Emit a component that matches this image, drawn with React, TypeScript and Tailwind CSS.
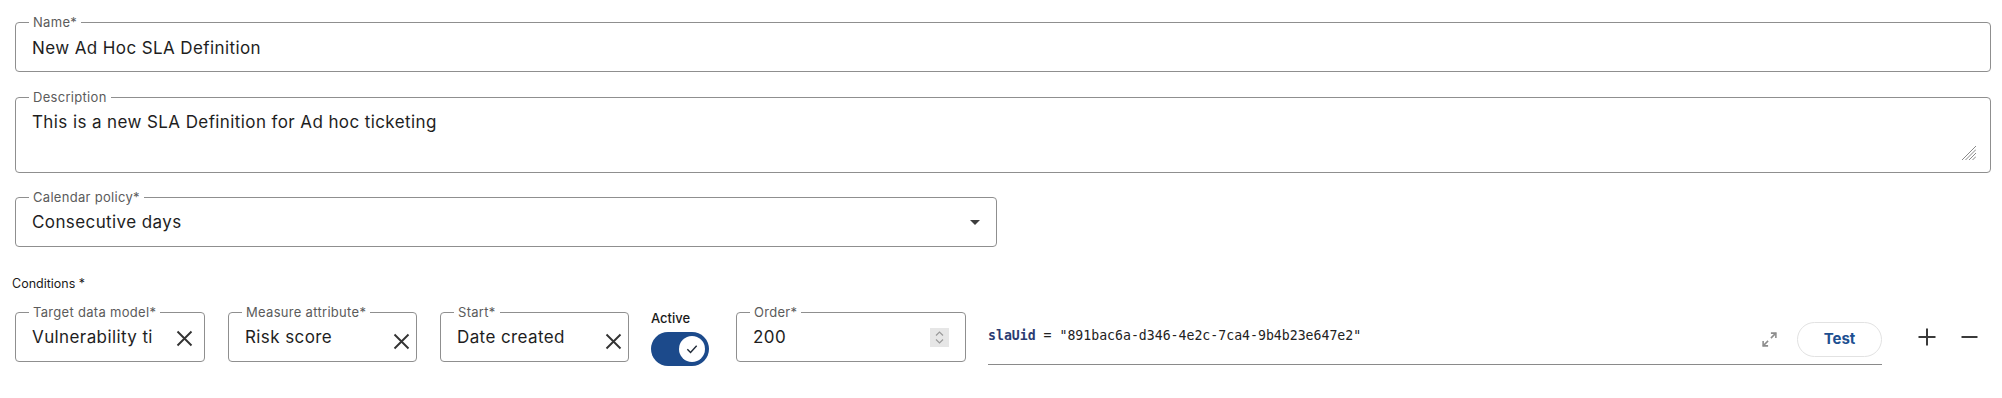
import React from "react";

const Field = ({
  label,
  className,
  children,
}: {
  label: string;
  className: string;
  children?: React.ReactNode;
}) => (
  <div className={"relative rounded-[4px] border border-[#8f8f8f] " + className}>
    <span className="absolute left-[13px] -top-[9px] bg-white px-[4px] text-[13px] leading-[16px] tracking-[0.3px] text-[#5b5b5b] whitespace-nowrap">
      {label}
    </span>
    {children}
  </div>
);

const CloseIcon = ({ className }: { className?: string }) => (
  <svg width="17" height="17" viewBox="0 0 17 17" className={className}>
    <path d="M1.5 1.5 L15.5 15.5 M15.5 1.5 L1.5 15.5" stroke="#333333" strokeWidth="1.9" />
  </svg>
);

export default function App() {
  return (
    <div className="min-h-[398px] bg-white pl-[15px] pr-[11px] pt-[22px] font-['Inter',sans-serif] text-[#1e1e1e]">
      <Field label="Name*" className="flex h-[50px] items-center pl-[16px] pt-[4px] text-[17px] tracking-[0.4px]">
        New Ad Hoc SLA Definition
      </Field>

      <Field label="Description" className="mt-[25px] h-[76px] pl-[16px] pt-[12px] text-[17px] leading-[24px] tracking-[0.4px]">
        This is a new SLA Definition for Ad hoc ticketing
        <svg
          width="15"
          height="14"
          viewBox="0 0 15 14"
          className="absolute bottom-[12px] right-[14px]"
        >
          <g stroke="#8a8a8a" strokeWidth="1">
            <line x1="15" y1="0" x2="1" y2="14" />
            <line x1="15" y1="3.5" x2="4.5" y2="14" />
            <line x1="15" y1="7" x2="8" y2="14" />
            <line x1="15" y1="10.5" x2="11.5" y2="14" />
          </g>
        </svg>
      </Field>

      <Field label="Calendar policy*" className="mt-[24px] flex h-[50px] w-[982px] items-center justify-between pl-[16px] pr-[16px] text-[17px] tracking-[0.4px]">
        <span className="pt-[2px]">Consecutive days</span>
        <svg width="10" height="5" viewBox="0 0 10 5">
          <path d="M0 0 L10 0 L5 5 Z" fill="#3d3d3d" />
        </svg>
      </Field>

      <div className="-ml-[3px] mt-[29px] text-[12.5px] leading-[16px] text-[#1a1a1a]">
        Conditions *
      </div>

      <div className="mt-[20px] flex items-start">
        <Field label="Target data model*" className="flex h-[50px] w-[190px] items-center pl-[16px] pr-[11px] pt-[2px] text-[17px] tracking-[0.4px]">
          <span className="w-[121px] overflow-hidden whitespace-nowrap">Vulnerability tickets</span>
          <CloseIcon className="ml-auto" />
        </Field>

        <Field label="Measure attribute*" className="ml-[23px] flex h-[50px] w-[189px] items-center pl-[16px] pr-[6px] pt-[2px] text-[17px] tracking-[0.4px]">
          <span className="whitespace-nowrap">Risk score</span>
          <CloseIcon className="ml-auto mt-[6px]" />
        </Field>

        <Field label="Start*" className="ml-[23px] flex h-[50px] w-[189px] items-center pl-[16px] pr-[6px] pt-[2px] text-[17px] tracking-[0.4px]">
          <span className="whitespace-nowrap">Date created</span>
          <CloseIcon className="ml-auto mt-[6px]" />
        </Field>

        <div className="-mt-[2px] ml-[22px] flex flex-col">
          <span className="text-[13px] font-medium leading-[16px] text-[#1a1a1a]">Active</span>
          <div className="mt-[6px] flex h-[34px] w-[58px] items-center justify-end rounded-full bg-[#1c4a8b]">
            <div className="mr-[4px] flex h-[26px] w-[26px] items-center justify-center rounded-full bg-white">
              <svg width="14" height="14" viewBox="0 0 24 24">
                <path d="M4 12.5 L9.5 18 L20 6.5" fill="none" stroke="#1f2937" strokeWidth="2.4" />
              </svg>
            </div>
          </div>
        </div>

        <Field label="Order*" className="ml-[27px] flex h-[50px] w-[230px] items-center justify-between pl-[16px] pr-[16px] text-[17px] tracking-[0.4px]">
          <span className="pt-[2px]">200</span>
          <div className="flex h-[19px] w-[19px] flex-col items-center justify-center bg-[#e6e6e6]">
            <svg width="9" height="15" viewBox="0 0 9 15">
              <path d="M1 5.5 L4.5 2 L8 5.5" fill="none" stroke="#9a9a9a" strokeWidth="1.2" />
              <path d="M1 9.5 L4.5 13 L8 9.5" fill="none" stroke="#9a9a9a" strokeWidth="1.2" />
            </svg>
          </div>
        </Field>

        <div className="ml-[22px] flex h-[53px] flex-1 items-center border-b border-[#8a8a8a]">
          <div className="mb-[4px] whitespace-nowrap font-['DejaVu_Sans_Mono',monospace] text-[13.2px] text-[#222]">
            <span className="font-bold text-[#2b3b72]">slaUid</span>
            {' = "891bac6a-d346-4e2c-7ca4-9b4b23e647e2"'}
          </div>
          <div className="ml-auto mt-[3px] flex items-center">
            <svg width="17" height="17" viewBox="0 0 24 24" fill="none" stroke="#8d8d8d" strokeWidth="2.2">
              <polyline points="14 3 21 3 21 10" />
              <polyline points="10 21 3 21 3 14" />
              <line x1="21" y1="3" x2="14" y2="10" />
              <line x1="3" y1="21" x2="10" y2="14" />
            </svg>
            <button className="ml-[19px] flex h-[35px] w-[85px] items-center justify-center rounded-full border border-[#e2e2e2] bg-white text-[15px] font-bold text-[#1d4f91]">
              Test
            </button>
          </div>
        </div>

        <div className="ml-[23px] flex h-[50px] items-center">
          <button className="flex h-[40px] w-[43px] items-center justify-center">
            <svg width="18" height="18" viewBox="0 0 18 18">
              <path d="M9 0.5 V17.5 M0.5 9 H17.5" stroke="#3a3a3a" strokeWidth="2" />
            </svg>
          </button>
          <button className="flex h-[40px] w-[43px] items-center justify-center">
            <svg width="17" height="18" viewBox="0 0 17 18">
              <path d="M0.5 9 H16.5" stroke="#3a3a3a" strokeWidth="2" />
            </svg>
          </button>
        </div>
      </div>
    </div>
  );
}
